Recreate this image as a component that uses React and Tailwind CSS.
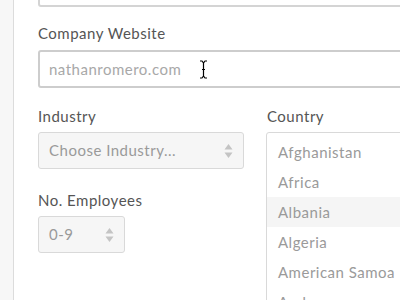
import React from "react";

const countries = ["Afghanistan", "Africa", "Albania", "Algeria", "American Samoa", "Andorra"];

function Arrows() {
  return (
    <svg width="9" height="16" viewBox="0 0 9 16" className="shrink-0">
      <path d="M4.5 1 L8.5 6.5 L0.5 6.5 Z" fill="#c4c4c4" />
      <path d="M4.5 15 L8.5 9.5 L0.5 9.5 Z" fill="#c4c4c4" />
    </svg>
  );
}

function Cursor() {
  return (
    <svg width="9" height="19" viewBox="0 0 9 19" className="absolute left-[159px] top-[8px]">
      <path d="M1 1 L3 1 L4.5 3 L6 1 L8 1 M4.5 3 L4.5 16 M1 18 L3 18 L4.5 16 L6 18 L8 18 M3 9.5 L6 9.5" stroke="#000" strokeWidth="1.2" fill="none" />
    </svg>
  );
}

export default function App() {
  return (
    <div className="w-[400px] h-[300px] overflow-hidden flex bg-white font-['Lato','Liberation_Sans',sans-serif] text-[15px] tracking-[0.5px]">
      <div className="w-[14px] shrink-0 bg-[#f7f7f7] border-r border-[#dcdcdc]" />
      <div className="flex-1 pl-[24px] flex flex-col">
        <div className="-mt-[32px] h-[39px] w-[400px] border-2 border-[#d4d4d4] rounded-[3px] shrink-0" />
        <label className="mt-[17px] leading-[18px] text-[#555]">Company Website</label>
        <div className="relative mt-[8px] h-[38px] w-[400px] border-2 border-[#cdcdcd] rounded-[3px] flex items-center pl-[9px] text-[#a8a8a8] shrink-0">
          nathanromero.com
          <Cursor />
        </div>
        <div className="flex mt-[19px] gap-[22px]">
          <div className="w-[206px] shrink-0 flex flex-col">
            <label className="leading-[18px] text-[#555]">Industry</label>
            <div className="mt-[7px] h-[37px] bg-[#f6f6f6] border border-[#d9d9d9] rounded-[3px] flex items-center justify-between pl-[10px] pr-[10px] text-[#9a9a9a]">
              <span>Choose Industry...</span>
              <Arrows />
            </div>
            <label className="mt-[22px] leading-[18px] text-[#555]">No. Employees</label>
            <div className="mt-[7px] w-[87px] h-[37px] bg-[#f6f6f6] border border-[#d9d9d9] rounded-[3px] flex items-center justify-between pl-[10px] pr-[10px] text-[#9a9a9a]">
              <span>0-9</span>
              <Arrows />
            </div>
          </div>
          <div className="w-[200px] shrink-0 flex flex-col">
            <label className="leading-[18px] text-[#555] pl-[1px]">Country</label>
            <div className="mt-[7px] h-[200px] border border-[#d9d9d9] rounded-tl-[3px] pt-[4px]">
              {countries.map((c) => (
                <div
                  key={c}
                  className={`h-[30px] flex items-center pl-[11px] text-[#9a9a9a] ${c === "Albania" ? "bg-[#f5f5f5]" : ""}`}
                >
                  {c}
                </div>
              ))}
            </div>
          </div>
        </div>
      </div>
    </div>
  );
}
